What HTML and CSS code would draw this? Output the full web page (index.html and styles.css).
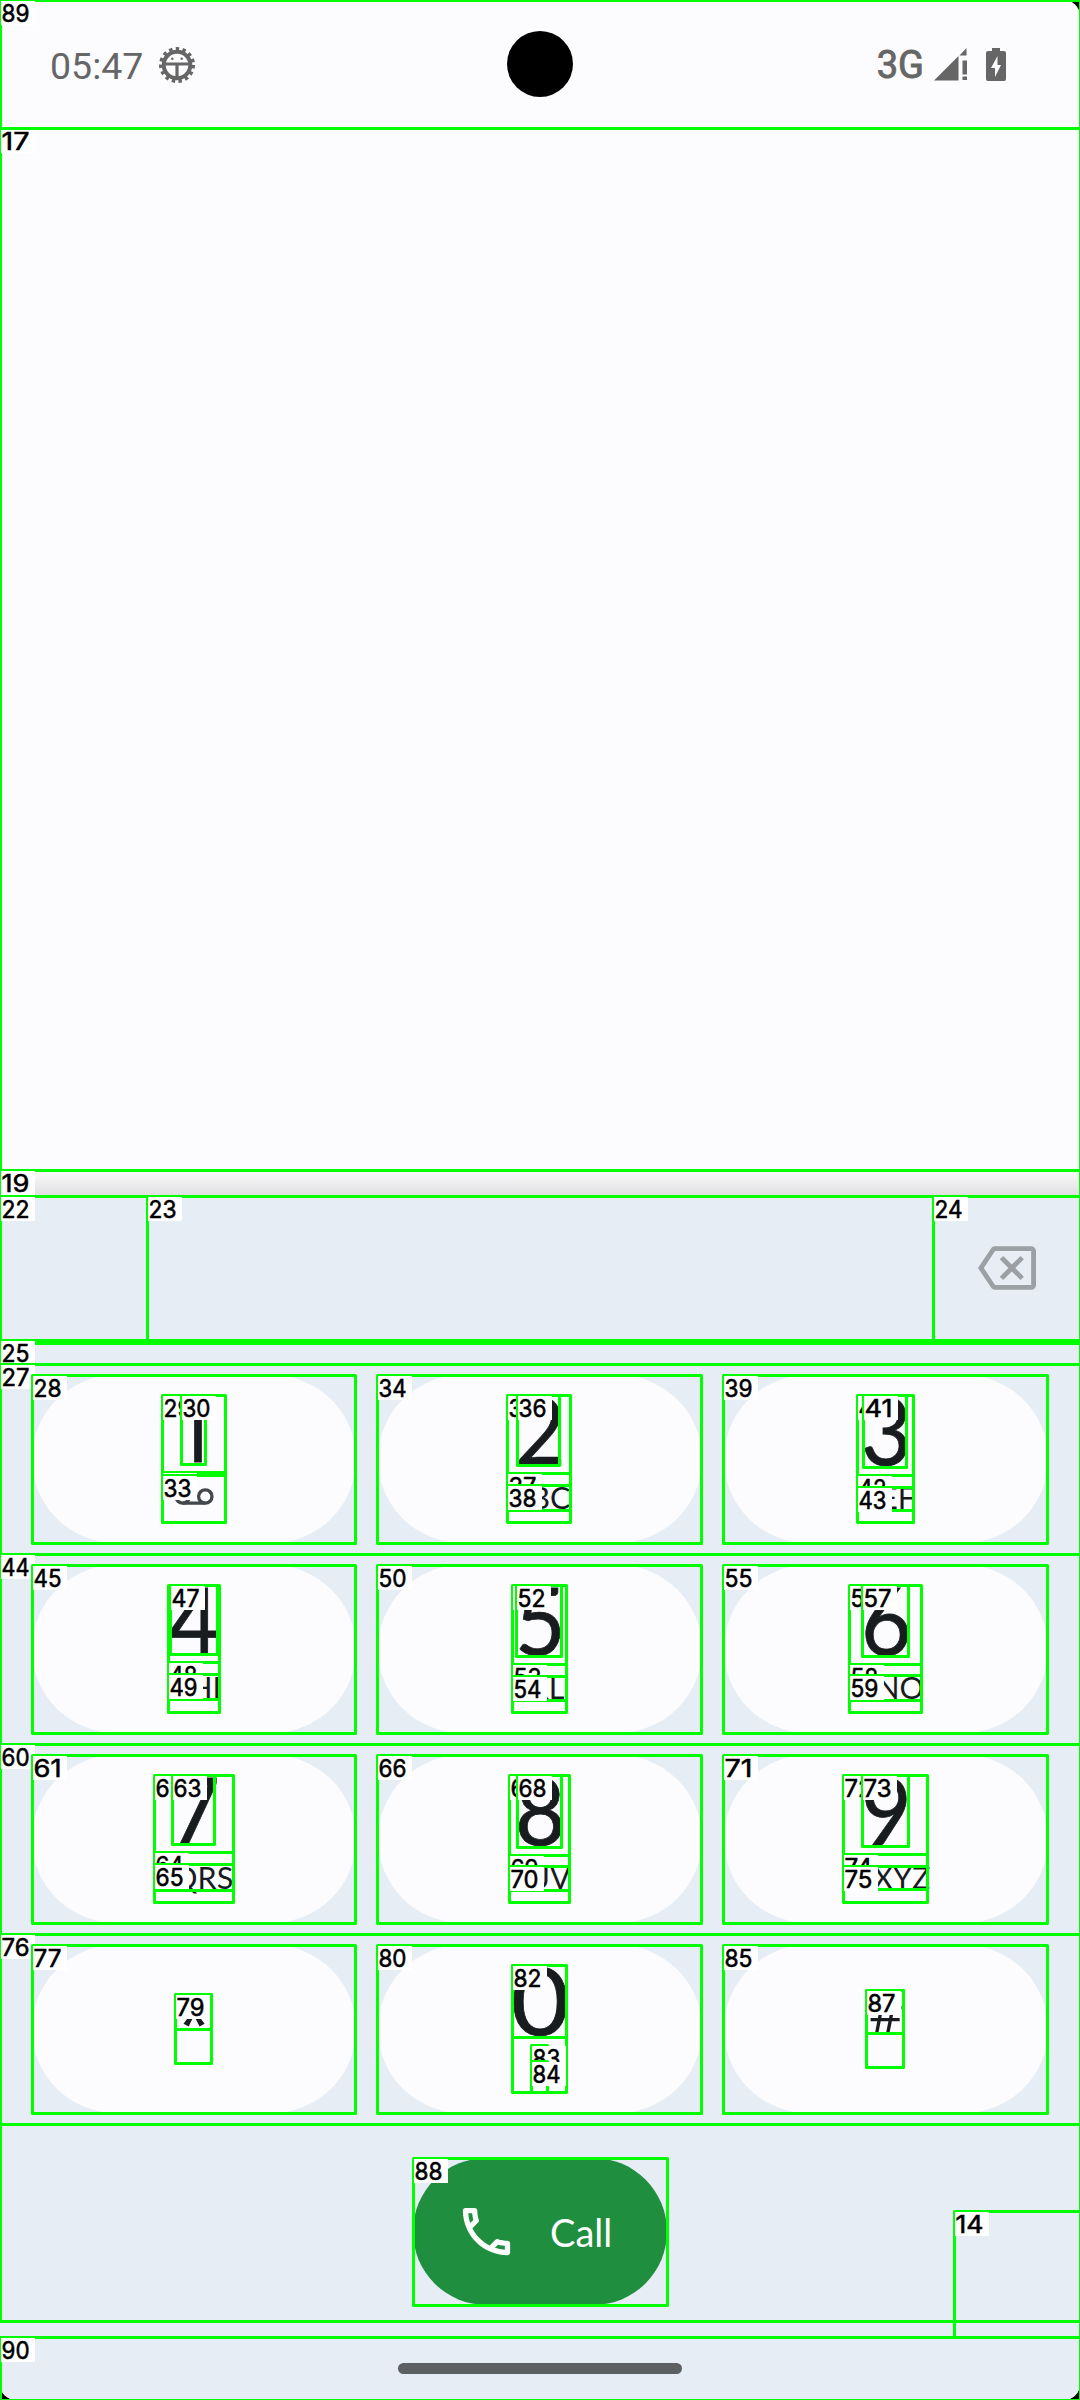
FILE: index.html
```html
<!DOCTYPE html>
<html lang="en">
<head>
<meta charset="utf-8">
<title>Phone dialer</title>
<link rel="stylesheet" href="styles.css">
</head>
<body>
<div class="device">
  <div class="screen">
    <header class="status">
      <div class="status-left">
        <span class="clock">05:47</span>
        <svg class="gear" viewBox="-18 -18 36 36"><circle r="13.300" fill="none" stroke="#666" stroke-width="4"/><circle r="16" fill="none" stroke="#666" stroke-width="4" stroke-dasharray="3.400 3.300"/><path d="M-13-1H13M0-1V14" stroke="#666" stroke-width="3.200" fill="none"/><circle cx="-4.700" cy="-6.200" r="1.200" fill="#666"/><circle cx="4.700" cy="-6.200" r="1.200" fill="#666"/></svg>
      </div>
      <div class="camera"></div>
      <div class="status-right">
        <span class="network">3G</span>
        <svg class="signal" viewBox="0 0 33 33"><path d="M0 32.500 24.500 8V32.500zM25.500 7.500 32.500 0V7.500zM28.500 12.500h4.500v14h-4.500zM28.500 28.500h4.500v3.500h-4.500z" fill="#666"/></svg>
        <svg class="battery" viewBox="0 0 20 33"><path fill-rule="evenodd" d="M6 0h8v3h4q2 0 2 2v26q0 2-2 2H2q-2 0-2-2V5q0-2 2-2h4zM11.500 8 5 20h4v9l6-12h-3.500z" fill="#666"/></svg>
      </div>
    </header>
    <main class="content"></main>
    <div class="shadow"></div>
    <section class="dialpad">
      <div class="number-row">
        <svg class="backspace" viewBox="0 0 24 24"><path d="M22 3H7c-.69 0-1.230.350-1.590.880L0 12l5.410 8.110c.360.530.9.890 1.590.890h15c1.100 0 2-.9 2-2V5c0-1.100-.9-2-2-2zm0 16H7.070L2.400 12l4.660-7H22v14zm-11.590-2L14 13.410 17.590 17 19 15.590 15.410 12 19 8.410 17.590 7 14 10.590 10.410 7 9 8.410 12.590 12 9 15.590z" fill="#9aa0a4"/></svg>
      </div>
      <div class="keys">
        <div class="key"><span class="digit one">1</span><svg class="voicemail" viewBox="0 0 40 20"><g fill="none" stroke="#43484c" stroke-width="3.300"><circle cx="8.700" cy="9.500" r="6.700"/><circle cx="31.300" cy="9.500" r="6.700"/><path d="M8.700 16.200H31.300"/></g></svg></div>
        <div class="key"><span class="digit">2</span><span class="letters">ABC</span></div>
        <div class="key"><span class="digit">3</span><span class="letters">DEF</span></div>
        <div class="key"><span class="digit">4</span><span class="letters">GHI</span></div>
        <div class="key"><span class="digit">5</span><span class="letters">JKL</span></div>
        <div class="key"><span class="digit">6</span><span class="letters">MNO</span></div>
        <div class="key"><span class="digit">7</span><span class="letters">PQRS</span></div>
        <div class="key"><span class="digit">8</span><span class="letters">TUV</span></div>
        <div class="key"><span class="digit">9</span><span class="letters">WXYZ</span></div>
        <div class="key symbol star"><span>*</span></div>
        <div class="key"><span class="digit zero">0</span><span class="letters">+</span></div>
        <div class="key symbol hash"><span>#</span></div>
      </div>
      <div class="call-row">
        <div class="call">
          <svg class="call-icon" viewBox="0 0 24 24"><path d="M6.540 5c.06.890.210 1.760.450 2.590l-1.200 1.200c-.410-1.200-.670-2.470-.760-3.790h1.510m9.860 12.020c.850.240 1.720.390 2.600.450v1.490c-1.320-.09-2.590-.350-3.800-.750l1.200-1.190M7.500 3H4c-.550 0-1 .450-1 1 0 9.390 7.610 17 17 17 .550 0 1-.450 1-1v-3.490c0-.550-.450-1-1-1-1.240 0-2.450-.2-3.570-.570-.1-.04-.210-.05-.310-.05-.260 0-.510.1-.710.290l-2.200 2.200c-2.830-1.450-5.150-3.760-6.590-6.590l2.200-2.200c.280-.280.360-.670.250-1.020C8.700 6.450 8.500 5.250 8.500 4c0-.550-.450-1-1-1z" fill="#fff"/></svg>
          <span class="call-text">Call</span>
        </div>
      </div>
    </section>
    <footer class="nav"><div class="handle"></div></footer>
  </div>
  <svg class="marks" viewBox="0 0 1080 2400"></svg>
</div>
<script src="marks.js"></script>
</body>
</html>
```
FILE: styles.css
```css
body { margin: 0; background: #000; }
.device { position: relative; width: 1080px; height: 2400px; overflow: hidden; background: #000; }
.screen { height: 2400px; display: flex; flex-direction: column; background: #fcfcfe; border-radius: 16px; overflow: hidden; font-family: Lato, sans-serif; }
.status { height: 128px; display: grid; grid-template-columns: 1fr 66px 1fr; align-items: center; flex: none; }
.status-left, .status-right { display: flex; align-items: center; height: 36px; color: #666; }
.status-left { padding: 1px 0 0 50px; gap: 15px; }
.clock { font: 400 37.5px/44px Roboto, sans-serif; width: 94px; padding-top: 2px; }
.gear { width: 36px; height: 36px; }
.camera { width: 66px; height: 66px; border-radius: 50%; background: #000; }
.status-right { justify-content: flex-end; padding-right: 74px; }
.network { font: 400 38px/44px Roboto, sans-serif; -webkit-text-stroke: 0.9px #666; margin-right: 10px; padding-top: 1px; }
.signal { width: 33px; height: 33px; margin-right: 19px; }
.battery { width: 20px; height: 33px; }
.content { height: 1042px; flex: none; }
.shadow { height: 26px; flex: none; background: linear-gradient(#fcfcfd, #dfdfe1); }
.dialpad { height: 1141px; flex: none; background: #e6edf4; }
.number-row { height: 144px; display: flex; justify-content: flex-end; align-items: center; padding-right: 44px; }
.backspace { width: 58px; height: 58px; }
.keys { display: grid; grid-template-columns: repeat(3, 324px); grid-auto-rows: 168px; gap: 22px; padding: 35px 32px 0; }
.key { display: flex; flex-direction: column; align-items: center; border-radius: 84px; background: #fcfcfe; color: #191c1e; overflow: hidden; }
.digit { font-size: 94px; line-height: 80px; height: 80px; margin-top: 14px; transform: scaleX(0.93); -webkit-text-stroke: 0.8px #191c1e; }
.one { font-family: "Open Sans", sans-serif; padding-left: 3px; line-height: 74px; }
.zero { transform: scaleX(1.08); }
.letters { font-size: 30.5px; line-height: 34px; margin-top: 11px; }
.voicemail { width: 40px; height: 20px; margin-top: 18px; }
.symbol { justify-content: center; font-family: "Open Sans", sans-serif; }
.star { font-size: 64px; line-height: 70px; }
.hash { font-size: 52px; line-height: 70px; }
.star span { padding-bottom: 12px; }
.hash span { padding-bottom: 35px; }
.call-row { display: flex; justify-content: center; padding-top: 45px; }
.call { width: 254px; height: 147px; border-radius: 74px; background: #1f8e3f; display: flex; align-items: center; box-sizing: border-box; padding-left: 42px; gap: 32px; color: #fff; }
.call-icon { width: 63px; height: 63px; }
.call-text { font-size: 38px; line-height: 46px; }
.nav { flex: 1; background: #e6edf4; display: flex; justify-content: center; align-items: flex-start; }
.handle { width: 284px; height: 11px; margin-top: 26px; border-radius: 6px; background: #5d6063; }
.marks { position: absolute; inset: 0; width: 1080px; height: 2400px; }
.mark-box { fill: none; stroke: #0f0; stroke-width: 3; stroke-linejoin: round; }
.mark-bg { fill: #fff; }
.mark-text { font: 400 24.5px Inter, sans-serif; fill: #000; stroke: #000; stroke-width: 0.6px; }
```
FILE: marks.js
```javascript
// [label, left, top, right, bottom]
const marks = [
  ["14", 954, 2211, 1080, 2337], ["17", 0, 128, 1080, 1170], ["19", 0, 1170, 1080, 1196],
  ["", 0, 1343, 1080, 2321],
  ["22", 0, 1196, 147, 1340], ["23", 147, 1196, 933, 1340], ["24", 933, 1196, 1080, 1340],
  ["25", 0, 1340, 1080, 1364],
  ["27", 0, 1364, 1080, 1554], ["28", 32, 1375, 355, 1543], ["29", 162, 1395, 225, 1472], ["30", 181, 1395, 205, 1464],
  ["31", 162, 1472, 225, 1475], ["33", 162, 1475, 225, 1522],
  ["34", 377, 1375, 701, 1543], ["35", 507, 1395, 570, 1473], ["36", 517, 1395, 559, 1465],
  ["37", 507, 1473, 570, 1522], ["38", 507, 1485, 570, 1510],
  ["39", 723, 1375, 1047, 1543], ["40", 857, 1395, 913, 1475], ["41", 863, 1395, 906, 1467],
  ["42", 857, 1475, 913, 1522], ["43", 857, 1487, 913, 1510],
  ["44", 0, 1554, 1080, 1744], ["45", 32, 1565, 355, 1733], ["46", 168, 1585, 219, 1662], ["47", 170, 1585, 217, 1654],
  ["48", 168, 1662, 219, 1712], ["49", 168, 1674, 219, 1699],
  ["50", 377, 1565, 701, 1733], ["51", 512, 1585, 566, 1664], ["52", 516, 1585, 561, 1656],
  ["53", 512, 1664, 566, 1712], ["54", 512, 1676, 566, 1700],
  ["55", 723, 1565, 1047, 1733], ["56", 849, 1585, 921, 1664], ["57", 862, 1585, 908, 1656],
  ["58", 849, 1664, 921, 1712], ["59", 849, 1675, 921, 1700],
  ["60", 0, 1744, 1080, 1934], ["61", 32, 1755, 355, 1923], ["62", 154, 1775, 233, 1852], ["63", 172, 1775, 214, 1844],
  ["64", 154, 1852, 233, 1902], ["65", 154, 1864, 233, 1890],
  ["66", 377, 1755, 701, 1923], ["67", 509, 1775, 569, 1855], ["68", 517, 1775, 561, 1847],
  ["69", 509, 1855, 569, 1902], ["70", 509, 1866, 569, 1890],
  ["71", 723, 1755, 1047, 1923], ["72", 843, 1775, 927, 1854], ["73", 862, 1775, 908, 1846],
  ["74", 843, 1854, 927, 1902], ["75", 843, 1866, 927, 1889],
  ["76", 0, 1934, 1080, 2124], ["77", 32, 1945, 355, 2113], ["", 175, 1994, 211, 2063], ["79", 175, 1994, 211, 2029],
  ["80", 377, 1945, 701, 2113], ["", 512, 1965, 566, 2092], ["82", 512, 1965, 566, 2037],
  ["83", 531, 2045, 547, 2092], ["84", 531, 2061, 547, 2092],
  ["85", 723, 1945, 1047, 2113], ["", 866, 1990, 903, 2067], ["87", 866, 1990, 903, 2033],
  ["88", 413, 2158, 667, 2305], ["89", 0, 0, 1080, 128], ["90", 0, 2337, 1080, 2400]
];
const layer = document.querySelector(".marks");
function add(name, attrs, text) {
  const el = document.createElementNS("http://www.w3.org/2000/svg", name);
  for (const key in attrs) el.setAttribute(key, attrs[key]);
  if (text) el.textContent = text;
  layer.appendChild(el);
}
for (const [label, x1, y1, x2, y2] of marks) {
  add("rect", { class: "mark-box", x: x1 + 0.5, y: y1 + 0.5, width: x2 - x1, height: y2 - y1 });
  if (label) {
    add("rect", { class: "mark-bg", x: x1 + 1, y: y1 + 1, width: 34, height: 24 });
    add("text", { class: "mark-text", x: x1 + 1.5, y: y1 + 22, textLength: 28, lengthAdjust: "spacingAndGlyphs" }, label);
  }
}
```
